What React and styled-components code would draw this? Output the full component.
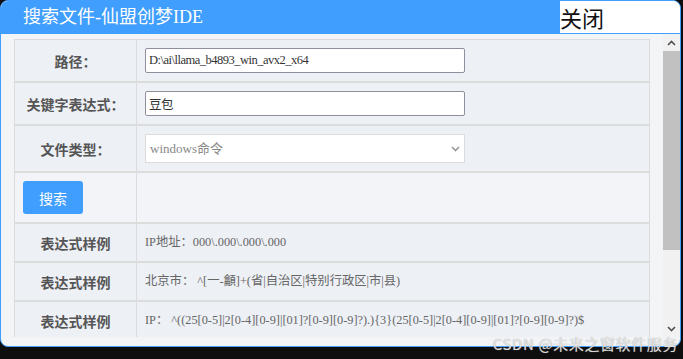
import React from "react";
import styled, { createGlobalStyle } from "styled-components";

const GlobalStyle = createGlobalStyle`
  html, body {
    margin: 0;
    padding: 0;
    background: #0e0e0e;
  }
  * {
    box-sizing: border-box;
  }
`;

const Page = styled.div`
  position: relative;
  width: 683px;
  height: 359px;
  overflow: hidden;
  background: #0e0e0e;
`;

const Window = styled.div`
  width: 681px;
  height: 347px;
  display: flex;
  flex-direction: column;
  border: 1px solid #409eff;
  border-radius: 8px;
  overflow: hidden;
  background: #f3f4f6;
`;

const Header = styled.div`
  display: flex;
  height: 33px;
  flex-shrink: 0;
`;

const Title = styled.div`
  width: 559px;
  background: #409eff;
  color: #fff;
  font-family: "Liberation Serif", "Noto Sans CJK SC", serif;
  font-size: 18px;
  line-height: 33px;
  padding-left: 22px;
`;

const Close = styled.div`
  flex: 1;
  background: #fff;
  border-bottom: 1px solid #409eff;
  color: #111;
  font-family: "Noto Sans CJK SC", sans-serif;
  font-size: 22px;
  line-height: 32px;
  cursor: pointer;
`;

const Body = styled.div`
  display: flex;
  height: 303px;
  flex-shrink: 0;
`;

const ScrollView = styled.div`
  flex: 1;
  overflow: hidden;
  padding: 5px 13px 0 13px;
`;

const Scrollbar = styled.div`
  width: 17px;
  display: flex;
  flex-direction: column;
  background: #f1f1f1;
`;

const ScrollButton = styled.div`
  height: 17px;
  display: flex;
  align-items: center;
  justify-content: center;
  color: #505050;
`;

const Thumb = styled.div`
  height: 199px;
  background: #c1c1c1;
`;

const Track = styled.div`
  flex: 1;
`;

const Table = styled.div`
  border: 1px solid #dcdcdc;
  border-bottom: none;
  font-family: "Liberation Serif", "Noto Sans CJK SC", serif;
`;

const Row = styled.div`
  display: grid;
  grid-template-columns: 122px 1fr;
  border-bottom: 2px solid #dcdcdc;
  background: ${(p) => (p.$light ? "#f2f4f7" : "#edf0f5")};
`;

const Label = styled.div`
  display: flex;
  align-items: center;
  justify-content: center;
  border-right: 1px solid #dcdcdc;
  color: #555;
  font-family: "Noto Sans CJK SC", sans-serif;
  font-weight: bold;
  font-size: 14px;
`;

const Cell = styled.div`
  display: flex;
  align-items: center;
  padding: 8px;
  color: #666;
  font-size: 12.3px;
  line-height: 21px;
  white-space: nowrap;
`;

const ButtonCell = styled.div`
  padding: 8px;
  border-right: 1px solid #dcdcdc;
`;

const Input = styled.input`
  width: 320px;
  height: 25px;
  border: 1px solid #8f8f9d;
  border-radius: 2px;
  padding: 0 3px;
  background: #fff;
  color: #333;
  font-family: "Liberation Serif", "Noto Sans CJK SC", serif;
  font-size: 12.5px;
  letter-spacing: -0.5px;
  outline: none;
`;

const SelectBox = styled.div`
  width: 320px;
  height: 29px;
  display: flex;
  align-items: center;
  justify-content: space-between;
  padding: 0 4px 0 4px;
  border: 1px solid #dcdcdc;
  background: #fff;
  color: #888;
  font-size: 13px;
`;

const SelectArrow = styled.span`
  display: flex;
  color: #999;
`;

const SearchButton = styled.button`
  width: 60px;
  height: 33px;
  border: none;
  border-radius: 3px;
  background: #409eff;
  color: #fff;
  font-family: "Noto Sans CJK SC", sans-serif;
  font-size: 14px;
  cursor: pointer;
`;

const Watermark = styled.div`
  position: absolute;
  right: 5px;
  top: 333px;
  color: rgba(255, 255, 255, 0.75);
  text-shadow: 0 0 1px #888;
  font-family: "Noto Sans CJK SC", sans-serif;
  font-size: 15px;
  letter-spacing: 0.6px;
`;

const Chevron = ({ up }) => (
  <svg width="9" height="6" viewBox="0 0 9 6">
    <path
      d={up ? "M1 5 L4.5 1.5 L8 5" : "M1 1 L4.5 4.5 L8 1"}
      fill="none"
      stroke="currentColor"
      strokeWidth="1.6"
    />
  </svg>
);

const samples = [
  "IP地址：000\\.000\\.000\\.000",
  "北京市： ^[一-龥]+(省|自治区|特别行政区|市|县)",
  "IP： ^((25[0-5]|2[0-4][0-9]|[01]?[0-9][0-9]?).){3}(25[0-5]|2[0-4][0-9]|[01]?[0-9][0-9]?)$",
];

export default function App() {
  return (
    <Page>
      <GlobalStyle />
      <Window>
        <Header>
          <Title>搜索文件-仙盟创梦IDE</Title>
          <Close>关闭</Close>
        </Header>
        <Body>
          <ScrollView>
            <Table>
              <Row>
                <Label>路径：</Label>
                <Cell>
                  <Input readOnly defaultValue="D:\ai\llama_b4893_win_avx2_x64" />
                </Cell>
              </Row>
              <Row>
                <Label>关键字表达式：</Label>
                <Cell>
                  <Input readOnly defaultValue="豆包" />
                </Cell>
              </Row>
              <Row>
                <Label>文件类型：</Label>
                <Cell>
                  <SelectBox>
                    <span>windows命令</span>
                    <SelectArrow>
                      <Chevron />
                    </SelectArrow>
                  </SelectBox>
                </Cell>
              </Row>
              <Row $light>
                <ButtonCell>
                  <SearchButton>搜索</SearchButton>
                </ButtonCell>
                <Cell />
              </Row>
              {samples.map((s, i) => (
                <Row key={i}>
                  <Label>表达式样例</Label>
                  <Cell>{s}</Cell>
                </Row>
              ))}
            </Table>
          </ScrollView>
          <Scrollbar>
            <ScrollButton>
              <Chevron up />
            </ScrollButton>
            <Thumb />
            <Track />
            <ScrollButton>
              <Chevron />
            </ScrollButton>
          </Scrollbar>
        </Body>
      </Window>
      <Watermark>CSDN @未来之窗软件服务</Watermark>
    </Page>
  );
}
